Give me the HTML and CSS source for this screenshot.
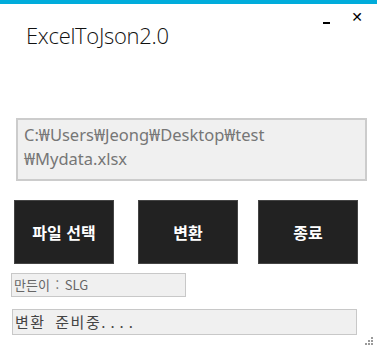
FILE: index.html
```html
<!DOCTYPE html>
<html lang="ko">
  <head>
    <meta charset="UTF-8" />
    <meta name="viewport" content="width=device-width, initial-scale=1.0" />
    <title>ExcelToJson2.0</title>
    <link rel="stylesheet" href="styles.css">
  </head>
  <body>
    <div class="window">
      <div class="title_bar">
        <h1 class="title">ExcelToJson2.0</h1>
        <div class="controls">
          <span class="btn_min"></span>
          <span class="btn_close">✕</span>
        </div>
      </div>

      <div class="path_box">C:₩Users₩Jeong₩Desktop₩test<br>₩Mydata.xlsx</div>

      <div class="button_row">
        <button class="action">파일 선택</button>
        <button class="action -mid">변환</button>
        <button class="action -last">종료</button>
      </div>

      <div class="maker_box">만든이 : SLG</div>
      <div class="status_box">변환 준비중<span class="dots">....</span></div>

      <svg class="grip" width="10" height="10" viewBox="0 0 10 10">
        <rect x="8" y="2" width="2" height="2" fill="#9a9a9a"/>
        <rect x="5" y="5" width="2" height="2" fill="#9a9a9a"/>
        <rect x="8" y="5" width="2" height="2" fill="#9a9a9a"/>
        <rect x="2" y="8" width="2" height="2" fill="#9a9a9a"/>
        <rect x="5" y="8" width="2" height="2" fill="#9a9a9a"/>
        <rect x="8" y="8" width="2" height="2" fill="#9a9a9a"/>
      </svg>
    </div>
  </body>
</html>
```

FILE: styles.css
```css
* {
  box-sizing: border-box;
}
body {
  margin: 0;
  background: #ffffff;
  font-family: "Noto Sans", "Noto Sans CJK KR", sans-serif;
}
div.window {
  position: relative;
  width: 377px;
  height: 349px;
  border-top: 4px solid #00acdb;
  overflow: hidden;
}
div.title_bar {
  display: flex;
  height: 114px;
}
h1.title {
  margin: 16px 0 0 26px;
  font-family: "Open Sans", "Noto Sans", sans-serif;
  font-weight: 300;
  font-size: 22px;
  line-height: 30px;
  color: #111111;
  letter-spacing: -0.3px;
}
div.controls {
  position: absolute;
  top: 4px;
  right: 14px;
  display: flex;
  align-items: flex-start;
}
span.btn_min {
  width: 7px;
  height: 2px;
  background: #000000;
  margin: 14px 21px 0 0;
}
span.btn_close {
  font-family: "DejaVu Sans", sans-serif;
  font-size: 14px;
  line-height: 16px;
  color: #000000;
  margin-top: 1px;
}
div.path_box {
  margin-left: 16px;
  width: 351px;
  height: 63px;
  border: 2px solid #cccccc;
  background: #f0f0f0;
  padding: 3px 0 0 6px;
  font-family: "Noto Sans", "Noto Sans CJK KR", sans-serif;
  font-size: 16.5px;
  line-height: 24px;
  color: #767676;
  letter-spacing: 0;
}
div.button_row {
  display: flex;
  margin: 19px 0 0 14px;
}
button.action {
  width: 100px;
  height: 64px;
  background: #222222;
  border: 1px solid #444444;
  color: #ffffff;
  font-family: "Noto Sans CJK KR", sans-serif;
  font-weight: 700;
  font-size: 16px;
  padding: 0;
}
button.-mid {
  margin-left: 24px;
}
button.-last {
  margin-left: 20px;
}
div.maker_box {
  margin: 9px 0 0 11px;
  width: 175px;
  height: 24px;
  border: 1px solid #c8c8c8;
  background: #f0f0f0;
  padding-left: 2px;
  font-family: "Noto Sans CJK KR", sans-serif;
  font-size: 13px;
  line-height: 21px;
  color: #666666;
  word-spacing: 2px;
}
div.status_box {
  margin: 12px 0 0 12px;
  width: 345px;
  height: 26px;
  border: 1px solid #c8c8c8;
  background: #f0f0f0;
  padding-left: 2px;
  font-family: "Noto Sans CJK KR", sans-serif;
  font-size: 15px;
  line-height: 23px;
  letter-spacing: 1.5px;
  word-spacing: 4px;
  color: #444444;
}
span.dots {
  letter-spacing: 5px;
}
svg.grip {
  position: absolute;
  right: 4px;
  bottom: 4px;
}
```
